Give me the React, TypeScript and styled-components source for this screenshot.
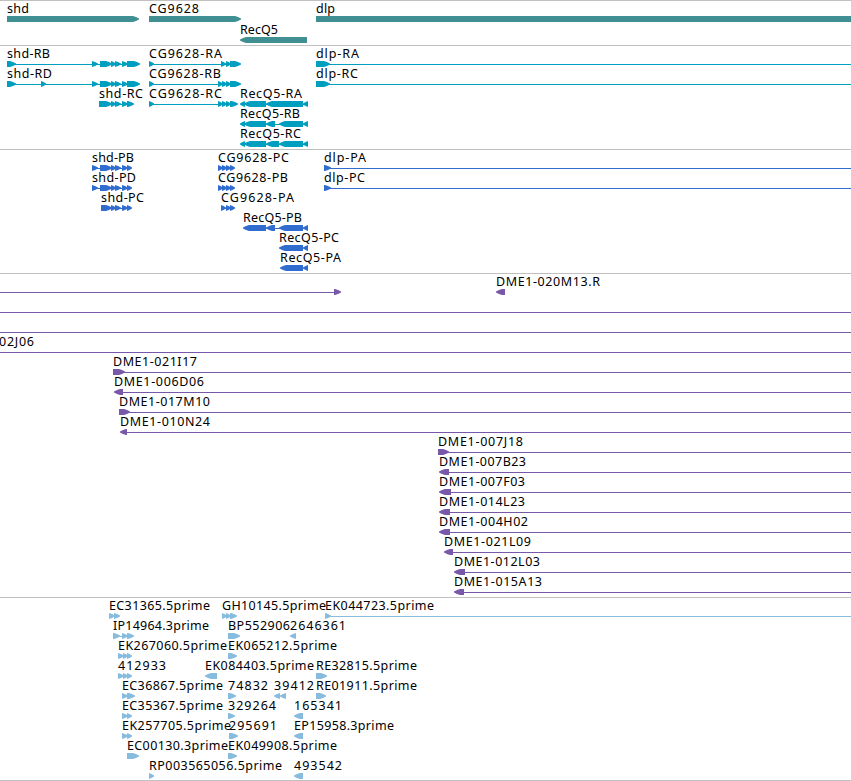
import styled, { createGlobalStyle } from "styled-components";

type Strand = "+" | "-";
type Exon = [start: number, end: number];

interface Feature {
  name?: string;
  // left and right edge of the name
  text?: [number, number];
  strand?: Strand;
  exons?: Exon[];
  intron?: Exon;
}

interface TrackData {
  id: string;
  color: string;
  rowHeight?: number;
  gap?: number;
  rows: Feature[][];
}

const END = 851;

const f = (
  name: string,
  text: [number, number],
  strand: Strand,
  exons: Exon[],
  intron?: Exon
): Feature => ({ name, text, strand, exons, intron });

const shdExons: Exon[] = [[111, 116], [115, 121], [122, 128]];
const shdProtein: Exon[] = [[111, 116], [115, 121], [122, 128], [127, 132]];
const cgTail: Exon[] = [[222, 227], [226, 231]];
const cgProtein: Exon[] = [[218, 223], [222, 227], [226, 231], [230, 235]];
const estTriple: Exon[] = [[118, 124], [123, 128], [127, 132]];

const tracks: TrackData[] = [
  {
    id: "genes",
    color: "#3f8f93",
    rowHeight: 21,
    gap: 2,
    rows: [
      [
        f("shd", [7, 29], "+", [[7, 139]]),
        f("CG9628", [149, 199], "+", [[149, 241]]),
        f("dlp", [316, 335], "+", [[316, 870]]),
      ],
      [f("RecQ5", [240, 278], "-", [[240, 307]])],
    ],
  },
  {
    id: "transcripts",
    color: "#009fc0",
    rows: [
      [
        f("shd-RB", [7, 50], "+", [[7, 16], [92, 98], [100, 112], ...shdExons, [127, 140]], [7, 138]),
        f("CG9628-RA", [149, 222], "+", [[149, 154], [221, 226], [226, 231], [230, 241]], [149, 238]),
        f("dlp-RA", [316, 359], "+", [[316, 330]], [316, END]),
      ],
      [
        f("shd-RD", [7, 52], "+", [[7, 16], [41, 46], [92, 98], [100, 112], ...shdExons, [127, 140]], [7, 138]),
        f("CG9628-RB", [149, 221], "+", [[149, 154], [218, 223], ...cgTail, [230, 241]], [149, 238]),
        f("dlp-RC", [316, 358], "+", [[316, 330]], [316, END]),
      ],
      [
        f("shd-RC", [99, 143], "+", [[99, 112], ...shdExons, [127, 134]], [99, 132]),
        f("CG9628-RC", [149, 222], "+", [[149, 154], [218, 223], ...cgTail, [230, 238]], [149, 236]),
        f("RecQ5-RA", [240, 302], "-", [[240, 245], [244, 266], [266, 303], [303, 308]], [242, 308]),
      ],
      [f("RecQ5-RB", [240, 300], "-", [[240, 245], [244, 266], [266, 275], [279, 303], [303, 308]], [242, 308])],
      [f("RecQ5-RC", [240, 301], "-", [[240, 245], [244, 266], [266, 279], [279, 303], [303, 308]], [242, 308])],
    ],
  },
  {
    id: "proteins",
    color: "#316dce",
    rows: [
      [
        f("shd-PB", [92, 134], "+", [[92, 98], [100, 112], ...shdProtein], [92, 130]),
        f("CG9628-PC", [218, 289], "+", cgProtein, [218, 233]),
        f("dlp-PA", [324, 366], "+", [[324, 331]], [324, END]),
      ],
      [
        f("shd-PD", [92, 136], "+", [[92, 98], [100, 112], ...shdProtein], [92, 130]),
        f("CG9628-PB", [218, 288], "+", cgProtein, [218, 233]),
        f("dlp-PC", [324, 365], "+", [[324, 331]], [324, END]),
      ],
      [
        f("shd-PC", [101, 144], "+", [[101, 112], ...shdProtein], [101, 130]),
        f("CG9628-PA", [221, 294], "+", [[221, 226], [226, 231], [230, 235]], [221, 233]),
      ],
      [f("RecQ5-PB", [243, 302], "-", [[243, 266], [266, 275], [279, 303], [303, 308]], [246, 308])],
      [f("RecQ5-PC", [279, 339], "-", [[279, 303], [303, 308]])],
      [f("RecQ5-PA", [280, 341], "-", [[280, 303], [303, 308]])],
    ],
  },
  {
    id: "bacs",
    color: "#7858a8",
    rows: [
      [
        { strand: "+", exons: [[334, 341]], intron: [0, 336] },
        f("DME1-020M13.R", [496, 600], "-", [[496, 505]]),
      ],
      [{ intron: [0, END] }],
      [{ intron: [0, END] }],
      [{ name: "02J06", text: [-1, 34], intron: [0, END] }],
      [f("DME1-021I17", [113, 197], "+", [[113, 125]], [113, END])],
      [f("DME1-006D06", [114, 204], "-", [[114, 123]], [117, END])],
      [f("DME1-017M10", [119, 210], "+", [[119, 130]], [119, END])],
      [f("DME1-010N24", [120, 210], "-", [[120, 127]], [123, END])],
      [f("DME1-007J18", [438, 523], "+", [[438, 449]], [438, END])],
      [f("DME1-007B23", [439, 526], "-", [[439, 449]], [442, END])],
      [f("DME1-007F03", [439, 525], "-", [[439, 451]], [442, END])],
      [f("DME1-014L23", [439, 525], "-", [[439, 450]], [442, END])],
      [f("DME1-004H02", [439, 528], "-", [[439, 450]], [442, END])],
      [f("DME1-021L09", [444, 531], "-", [[444, 453]], [447, END])],
      [f("DME1-012L03", [454, 540], "-", [[454, 465]], [457, END])],
      [f("DME1-015A13", [454, 542], "-", [[454, 464]], [457, END])],
    ],
  },
  {
    id: "ests",
    color: "#87bcde",
    gap: 2,
    rows: [
      [
        f("EC31365.5prime", [109, 210], "+", [[109, 115], [114, 120]]),
        f("GH10145.5prime", [222, 326], "+", [[222, 227], [226, 231], [230, 237]]),
        f("EK044723.5prime", [325, 434], "+", [[325, 331]], [325, END]),
      ],
      [
        f("IP14964.3prime", [113, 209], "+", [[113, 120], [122, 128], [127, 134]], [113, 132]),
        f("BP552906", [228, 290], "+", [[228, 240]]),
        f("2646361", [290, 346], "-", [[290, 296]]),
      ],
      [
        f("EK267060.5prime", [118, 227], "+", estTriple),
        f("EK065212.5prime", [228, 337], "+", [[228, 237]]),
      ],
      [
        f("412933", [118, 166], "+", estTriple),
        f("EK084403.5prime", [205, 314], "-", [[205, 217]]),
        f("RE32815.5prime", [316, 417], "+", [[316, 327]]),
      ],
      [
        f("EC36867.5prime", [122, 223], "+", [[122, 128], [127, 135]]),
        f("74832", [228, 268], "+", [[228, 236]]),
        f("39412", [274, 314], "-", [[274, 280], [280, 286]]),
        f("RE01911.5prime", [316, 417], "+", [[316, 326]]),
      ],
      [
        f("EC35367.5prime", [122, 223], "+", [[122, 128], [127, 132]]),
        f("329264", [228, 276], "+", [[228, 235]]),
        f("165341", [294, 342], "-", [[294, 303]]),
      ],
      [
        f("EK257705.5prime", [122, 231], "+", [[122, 128], [127, 132]]),
        f("295691", [229, 277], "+", [[229, 238]]),
        f("EP15958.3prime", [294, 394], "-", [[294, 303]]),
      ],
      [
        f("EC00130.3prime", [127, 228], "+", [[127, 139]]),
        f("EK049908.5prime", [228, 337], "+", [[228, 237]]),
      ],
      [
        f("RP003565056.5prime", [149, 282], "+", [[149, 154]]),
        f("493542", [294, 342], "-", [[294, 303]]),
      ],
    ],
  },
];

// flat block with a blunt head, narrowing in two steps towards the tip
function exonPoints([start, end]: Exon, strand?: Strand) {
  const size = Math.min(6, end - start);
  const [back, tip, head] = strand === "-" ? [end, start, -size] : [start, end, size];
  const neck = tip - head;
  const mid = tip - head / 2;
  return [
    [back, 15],
    [neck, 15],
    [mid, 16],
    [tip, 17.6],
    [tip, 18.6],
    [mid, 20],
    [neck, 21],
    [back, 21],
  ].join(" ");
}

function Glyph({ feature }: { feature: Feature }) {
  const { name, text, strand, exons = [], intron } = feature;
  return (
    <g>
      {intron && <rect x={intron[0]} y={18} width={intron[1] - intron[0]} height={1} />}
      {exons.map((exon) => (
        <polygon key={exon[0]} points={exonPoints(exon, strand)} />
      ))}
      {name && text && (
        <Name x={text[0]} y={12} textLength={text[1] - text[0]}>
          {name}
        </Name>
      )}
    </g>
  );
}

export default function App() {
  return (
    <>
      <GlobalStyle />
      <Browser>
        {tracks.map((track) => (
          <Track key={track.id} $color={track.color} $gap={track.gap ?? 3}>
            {track.rows.map((row, i) => (
              <Row key={i} $height={track.rowHeight ?? 20}>
                {row.map((feature, j) => (
                  <Glyph key={j} feature={feature} />
                ))}
              </Row>
            ))}
          </Track>
        ))}
      </Browser>
    </>
  );
}

const GlobalStyle = createGlobalStyle`
  body {
    margin: 0;
    background: white;
    overflow: hidden;
  }
`;

const Browser = styled.main`
  display: flex;
  flex-direction: column;
  width: 851px;
  border-bottom: 1px solid #c0c0c0;
  overflow: hidden;
`;

const Track = styled.section<{ $color: string; $gap: number }>`
  display: flex;
  flex-direction: column;
  border-top: 1px solid #c0c0c0;
  padding-bottom: ${(p) => p.$gap}px;
  fill: ${(p) => p.$color};
`;

const Row = styled.svg<{ $height: number }>`
  display: block;
  width: 100%;
  height: ${(p) => p.$height}px;
  overflow: visible;
`;

const Name = styled.text`
  fill: black;
  font-family: "Noto Sans", sans-serif;
  font-size: 12.5px;
`;
